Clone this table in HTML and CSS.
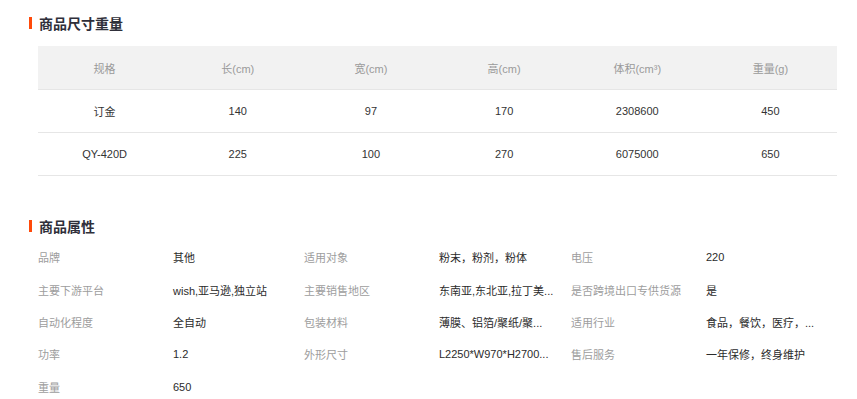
FILE: index.html
```html
<!DOCTYPE html>
<html lang="zh-CN">
<head>
<meta charset="utf-8">
<title>商品尺寸重量</title>
<link rel="stylesheet" href="styles.css">
</head>
<body>
<div class="page">
  <section class="size-section">
    <h2 class="sec-title">商品尺寸重量</h2>
    <div class="size-table">
      <div class="row head">
        <div class="cell">规格</div>
        <div class="cell">长(cm)</div>
        <div class="cell">宽(cm)</div>
        <div class="cell">高(cm)</div>
        <div class="cell">体积(cm³)</div>
        <div class="cell">重量(g)</div>
      </div>
      <div class="row">
        <div class="cell">订金</div>
        <div class="cell">140</div>
        <div class="cell">97</div>
        <div class="cell">170</div>
        <div class="cell">2308600</div>
        <div class="cell">450</div>
      </div>
      <div class="row">
        <div class="cell">QY-420D</div>
        <div class="cell">225</div>
        <div class="cell">100</div>
        <div class="cell">270</div>
        <div class="cell">6075000</div>
        <div class="cell">650</div>
      </div>
    </div>
  </section>

  <section class="attr-section">
    <h2 class="sec-title">商品属性</h2>
    <div class="attr-grid">
      <div class="label">品牌</div><div class="value">其他</div>
      <div class="label">适用对象</div><div class="value">粉末，粉剂，粉体</div>
      <div class="label">电压</div><div class="value">220</div>

      <div class="label">主要下游平台</div><div class="value">wish,亚马逊,独立站</div>
      <div class="label">主要销售地区</div><div class="value">东南亚,东北亚,拉丁美...</div>
      <div class="label">是否跨境出口专供货源</div><div class="value">是</div>

      <div class="label">自动化程度</div><div class="value">全自动</div>
      <div class="label">包装材料</div><div class="value">薄膜、铝箔/聚纸/聚...</div>
      <div class="label">适用行业</div><div class="value">食品，餐饮，医疗，...</div>

      <div class="label">功率</div><div class="value">1.2</div>
      <div class="label">外形尺寸</div><div class="value">L2250*W970*H2700...</div>
      <div class="label">售后服务</div><div class="value">一年保修，终身维护</div>

      <div class="label">重量</div><div class="value">650</div>
    </div>
  </section>
</div>
</body>
</html>
```

FILE: styles.css
```css
* {
  box-sizing: border-box;
}

body {
  margin: 0;
  background: #ffffff;
  font-family: "Liberation Sans", "Noto Sans CJK SC", sans-serif;
  font-size: 11px;
  color: #333333;
}

.page {
  padding: 16px 0 0 29px;
  width: 857px;
}

.sec-title {
  display: flex;
  align-items: center;
  gap: 7px;
  margin: 0;
  height: 14px;
  line-height: 14px;
  font-size: 14px;
  font-weight: bold;
  color: #2f2f3a;
  font-family: "Noto Sans CJK SC", sans-serif;
}

.sec-title::before {
  content: "";
  display: block;
  width: 3px;
  height: 12px;
  background: #ff4a0a;
}

.size-table {
  margin: 16px 0 0 9px;
  width: 799px;
}

.row {
  display: grid;
  grid-template-columns: repeat(6, 1fr);
  height: 43px;
  border-bottom: 1px solid #e6e6e6;
}

.row.head {
  height: 44px;
  background: #f2f2f2;
  color: #9a9a9a;
}

.cell {
  display: flex;
  align-items: center;
  justify-content: center;
  white-space: nowrap;
}

.attr-section {
  margin-top: 43px;
}

.attr-grid {
  margin: 8px 0 0 9px;
  display: grid;
  grid-template-columns: 135px 131px 135px 132px 135px 131px;
  grid-auto-rows: 32.4px;
  align-items: center;
}

.label {
  color: #9d9d9d;
  white-space: nowrap;
}

.value {
  color: #2b2b2b;
  white-space: nowrap;
}
```
